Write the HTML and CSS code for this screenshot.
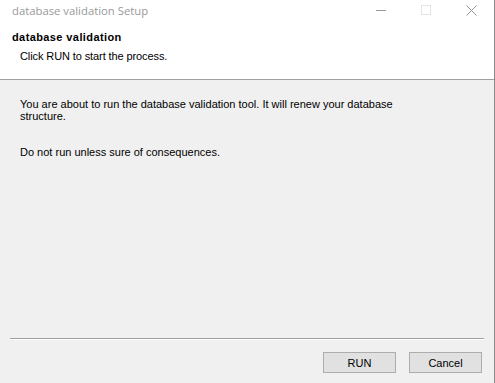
FILE: index.html
```html
<!DOCTYPE html>
<html lang="en">
<head>
  <meta charset="UTF-8">
  <title>database validation Setup</title>
  <link rel="stylesheet" href="styles.css">
</head>
<body>
  <div class="window">
    <div class="titlebar">
      <div class="title">database validation Setup</div>
      <div class="controls">
        <div class="ctrl">
          <svg width="11" height="11" viewBox="0 0 11 11"><path d="M0 5.5h10" stroke="#999" stroke-width="1"/></svg>
        </div>
        <div class="ctrl">
          <svg width="11" height="11" viewBox="0 0 11 11"><rect x="0.5" y="0.5" width="9" height="9" fill="none" stroke="#e3e3e3"/></svg>
        </div>
        <div class="ctrl">
          <svg width="11" height="11" viewBox="0 0 11 11"><path d="M0.5 0.5l10 10M10.5 0.5l-10 10" stroke="#999" stroke-width="1"/></svg>
        </div>
      </div>
    </div>

    <div class="header">
      <div class="header-title">database validation</div>
      <div class="header-sub">Click RUN to start the process.</div>
    </div>

    <div class="content">
      <p class="message">You are about to run the database validation tool. It will renew your database structure.</p>
      <p class="message">Do not run unless sure of consequences.</p>
    </div>

    <div class="footer">
      <div class="separator"></div>
      <div class="buttons">
        <button class="btn">RUN</button>
        <button class="btn">Cancel</button>
      </div>
    </div>
  </div>
</body>
</html>
```

FILE: styles.css
```css
body {
  margin: 0;
  padding: 0;
  font-family: 'Liberation Sans', Arial, sans-serif;
  font-size: 11px;
  color: #000;
  background-color: #fff;
  overflow: hidden;
}

.window {
  width: 494px;
  height: 383px;
  display: flex;
  flex-direction: column;
  border-right: 1px solid #8a8a8a;
  background-color: #f0f0f0;
}

.titlebar {
  height: 30px;
  display: flex;
  justify-content: space-between;
  align-items: center;
  background-color: #fff;
}

.title {
  padding-left: 12px;
  padding-bottom: 9px;
  font-family: 'Open Sans', sans-serif;
  font-size: 11.3px;
  color: #999;
}

.controls {
  display: flex;
  align-self: flex-start;
  padding-top: 5px;
}

.ctrl {
  width: 45px;
  display: flex;
  justify-content: center;
}

.header {
  height: 50px;
  background-color: #fff;
  border-bottom: 1px solid #a0a0a0;
  box-sizing: border-box;
}

.header-title {
  padding-left: 12px;
  padding-top: 1px;
  font-weight: bold;
  letter-spacing: 0.4px;
  line-height: 13px;
}

.header-sub {
  padding-left: 20px;
  padding-top: 6px;
  letter-spacing: -0.1px;
  line-height: 13px;
}

.content {
  flex: 1;
  padding: 18px 20px 0 20px;
}

.message {
  margin: 0 0 24px 0;
  line-height: 12px;
  width: 400px;
}

.footer {
  padding: 0 10px 10px 10px;
}

.separator {
  border-top: 1px solid #a0a0a0;
  border-bottom: 1px solid #fff;
  margin-bottom: 12px;
}

.buttons {
  display: flex;
  justify-content: flex-end;
  gap: 13px;
  padding-right: 2px;
}

.btn {
  width: 73px;
  height: 21px;
  background-color: #e1e1e1;
  border: 1px solid #adadad;
  font-family: 'Liberation Sans', Arial, sans-serif;
  font-size: 11px;
  color: #000;
  padding: 0;
}
```
